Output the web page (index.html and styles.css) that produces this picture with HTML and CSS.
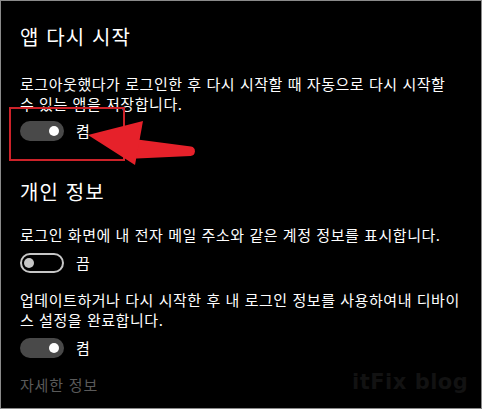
FILE: index.html
```html
<!DOCTYPE html>
<html lang="ko">
<head>
<meta charset="utf-8">
<link rel="stylesheet" href="styles.css">
</head>
<body>
<div class="screen">
  <section class="group group-restart">
    <h2 class="title">앱 다시 시작</h2>
    <p class="desc">로그아웃했다가 로그인한 후 다시 시작할 때 자동으로 다시 시작할 수 있는 앱을 저장합니다.</p>
    <div class="toggle-row">
      <span class="toggle on"><span class="knob"></span></span>
      <span class="state">켬</span>
    </div>
  </section>
  <section class="group group-privacy">
    <h2 class="title">개인 정보</h2>
    <p class="desc">로그인 화면에 내 전자 메일 주소와 같은 계정 정보를 표시합니다.</p>
    <div class="toggle-row">
      <span class="toggle off"><span class="knob"></span></span>
      <span class="state">끔</span>
    </div>
    <p class="desc desc-gap">업데이트하거나 다시 시작한 후 내 로그인 정보를 사용하여내 디바이스 설정을 완료합니다.</p>
    <div class="toggle-row">
      <span class="toggle on"><span class="knob"></span></span>
      <span class="state">켬</span>
    </div>
    <a class="more">자세한 정보</a>
  </section>

  <div class="highlight-box"></div>
  <svg class="arrow" width="482" height="409" viewBox="0 0 482 409">
    <path d="M126 138 L191 146.5 A4.8 4.8 0 0 1 190.5 156 L126 159 Z" fill="#e6212a"/>
    <polygon points="88,135 143,121 135,165" fill="#e6212a"/>
  </svg>
  <div class="watermark">itFix blog</div>
</div>
</body>
</html>
```

FILE: styles.css
```css
html, body {
  margin: 0;
  padding: 0;
  background: #000;
}

.screen {
  position: relative;
  width: 482px;
  height: 409px;
  box-sizing: border-box;
  border: 1px solid #8a8a8a;
  background: #000;
  padding: 22px 19px 0 19px;
  overflow: hidden;
  font-family: "Noto Sans CJK KR", "Noto Sans", sans-serif;
  color: #fff;
}

.group {
  display: flex;
  flex-direction: column;
  align-items: flex-start;
}

.group-privacy {
  margin-top: 37px;
}

.title {
  margin: 0;
  font-size: 20px;
  font-weight: 400;
  line-height: 28px;
  color: #fff;
  letter-spacing: 1.1px;
}

.desc {
  margin: 23px 0 0 0;
  width: 443px;
  font-size: 15px;
  line-height: 20px;
  color: #fff;
  letter-spacing: 0.55px;
  word-break: break-all;
}

.group-privacy .desc {
  margin-top: 19px;
}

.group-privacy .desc.desc-gap {
  margin-top: 17px;
}

.toggle-row {
  display: flex;
  align-items: center;
  gap: 12px;
  margin-top: 7px;
  height: 20px;
}

.group-privacy .toggle-row {
  margin-top: 8px;
}

.toggle {
  position: relative;
  display: flex;
  align-items: center;
  width: 44px;
  height: 20px;
  box-sizing: border-box;
  border-radius: 10px;
}

.toggle.on {
  background: #494949;
  justify-content: flex-end;
  padding-right: 5px;
}

.toggle.off {
  border: 2px solid #c6c6c6;
  padding-left: 2px;
}

.knob {
  width: 10px;
  height: 10px;
  border-radius: 50%;
}

.toggle.on .knob {
  background: #fff;
}

.toggle.off .knob {
  background: #c6c6c6;
}

.state {
  font-size: 15px;
  line-height: 20px;
  color: #fff;
}

.more {
  margin-top: 17px;
  font-size: 15px;
  line-height: 20px;
  color: #5a5a5a;
  letter-spacing: 0.8px;
}

.highlight-box {
  position: absolute;
  left: 8px;
  top: 106px;
  width: 116px;
  height: 54px;
  box-sizing: border-box;
  border: 2px solid #cc2229;
}

.arrow {
  position: absolute;
  left: -1px;
  top: -1px;
}

.watermark {
  position: absolute;
  left: 351px;
  top: 369px;
  font-family: "DejaVu Sans", sans-serif;
  font-weight: 700;
  font-size: 21px;
  line-height: 24px;
  color: #121212;
  text-shadow: 0 0 3px #000, 1px 1px 2px #000;
  letter-spacing: 0.5px;
}
```
